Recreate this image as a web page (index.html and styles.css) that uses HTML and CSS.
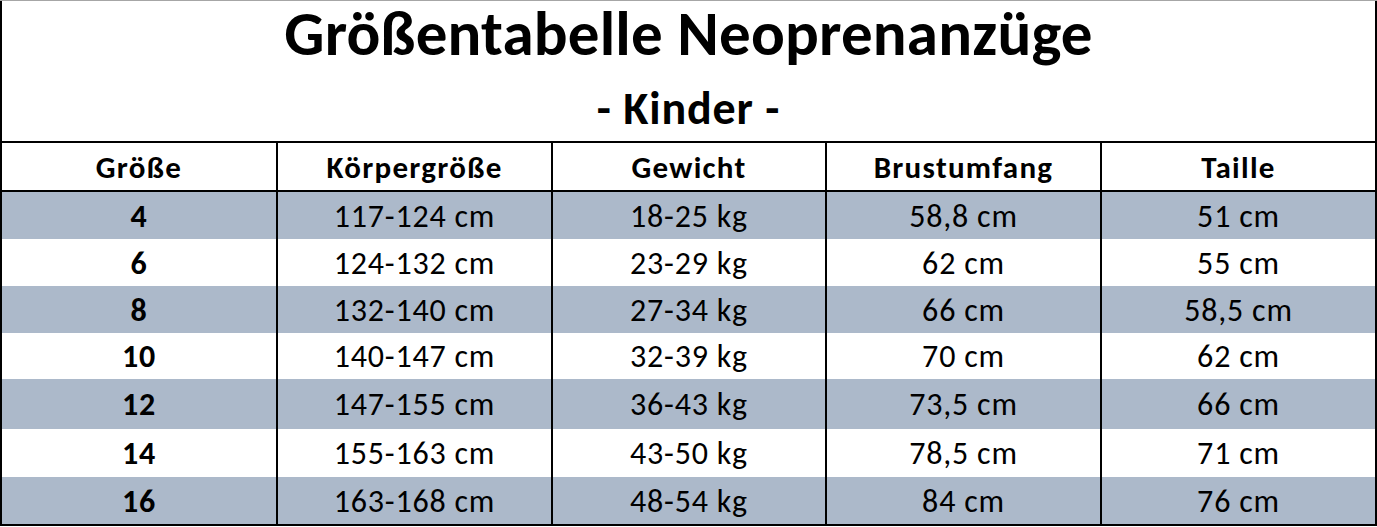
FILE: index.html
```html
<!DOCTYPE html>
<html lang="de">
<head>
<meta charset="utf-8">
<title>Größentabelle Neoprenanzüge</title>
<link rel="stylesheet" href="styles.css">
</head>
<body>
<div class="sheet">
  <div class="title-box">
    <div class="title">Größentabelle Neoprenanzüge</div>
    <div class="subtitle">- Kinder -</div>
  </div>
  <div class="row head">
    <div class="cell">Größe</div>
    <div class="cell">Körpergröße</div>
    <div class="cell">Gewicht</div>
    <div class="cell">Brustumfang</div>
    <div class="cell">Taille</div>
  </div>
  <div class="body">
    <div class="row r47 alt"><div class="cell size">4</div><div class="cell">117-124 cm</div><div class="cell">18-25 kg</div><div class="cell">58,8 cm</div><div class="cell">51 cm</div></div>
    <div class="row r47"><div class="cell size">6</div><div class="cell">124-132 cm</div><div class="cell">23-29 kg</div><div class="cell">62 cm</div><div class="cell">55 cm</div></div>
    <div class="row r47 alt"><div class="cell size">8</div><div class="cell">132-140 cm</div><div class="cell">27-34 kg</div><div class="cell">66 cm</div><div class="cell">58,5 cm</div></div>
    <div class="row r46"><div class="cell size">10</div><div class="cell">140-147 cm</div><div class="cell">32-39 kg</div><div class="cell">70 cm</div><div class="cell">62 cm</div></div>
    <div class="row r50 alt"><div class="cell size">12</div><div class="cell">147-155 cm</div><div class="cell">36-43 kg</div><div class="cell">73,5 cm</div><div class="cell">66 cm</div></div>
    <div class="row r48"><div class="cell size">14</div><div class="cell">155-163 cm</div><div class="cell">43-50 kg</div><div class="cell">78,5 cm</div><div class="cell">71 cm</div></div>
    <div class="row r47 alt"><div class="cell size">16</div><div class="cell">163-168 cm</div><div class="cell">48-54 kg</div><div class="cell">84 cm</div><div class="cell">76 cm</div></div>
  </div>
</div>
</body>
</html>
```
FILE: styles.css
```css
html, body {
  margin: 0;
  padding: 0;
  background: #ffffff;
}

body {
  font-family: "Carlito", "Lato", "Liberation Sans", sans-serif;
  color: #000000;
}

.sheet {
  width: 1377px;
  border-top: 1px solid #a6a6a6;
}

.title-box {
  height: 140px;
  border-left: 2px solid #000;
  border-right: 2px solid #000;
  border-bottom: 2px solid #000;
  display: flex;
  flex-direction: column;
  align-items: center;
}

.title {
  font-weight: 700;
  font-size: 63px;
  line-height: 68px;
  letter-spacing: 0.2px;
  margin-top: -1px;
}

.subtitle {
  font-weight: 700;
  font-size: 46px;
  line-height: 50px;
  letter-spacing: 0.9px;
  margin-top: 15px;
}

.row {
  display: grid;
  grid-template-columns: 276px 275px 274px 275px 275px;
  border-left: 2px solid #000;
}

.cell {
  border-right: 2px solid #000;
  display: flex;
  align-items: center;
  justify-content: center;
  font-size: 32px;
  letter-spacing: 0.8px;
  white-space: nowrap;
  padding-top: 1px;
}

.head {
  height: 47px;
  border-bottom: 2px solid #000;
}

.head .cell {
  font-weight: 700;
  font-size: 31px;
  letter-spacing: 1.3px;
  padding-top: 0;
}

.body {
  border-bottom: 2px solid #000;
}

.r46 { height: 46px; }
.r47 { height: 47px; }
.r48 { height: 48px; }
.r50 { height: 50px; }

.alt {
  background: #acb9ca;
}

.cell.size {
  font-weight: 700;
}
```
